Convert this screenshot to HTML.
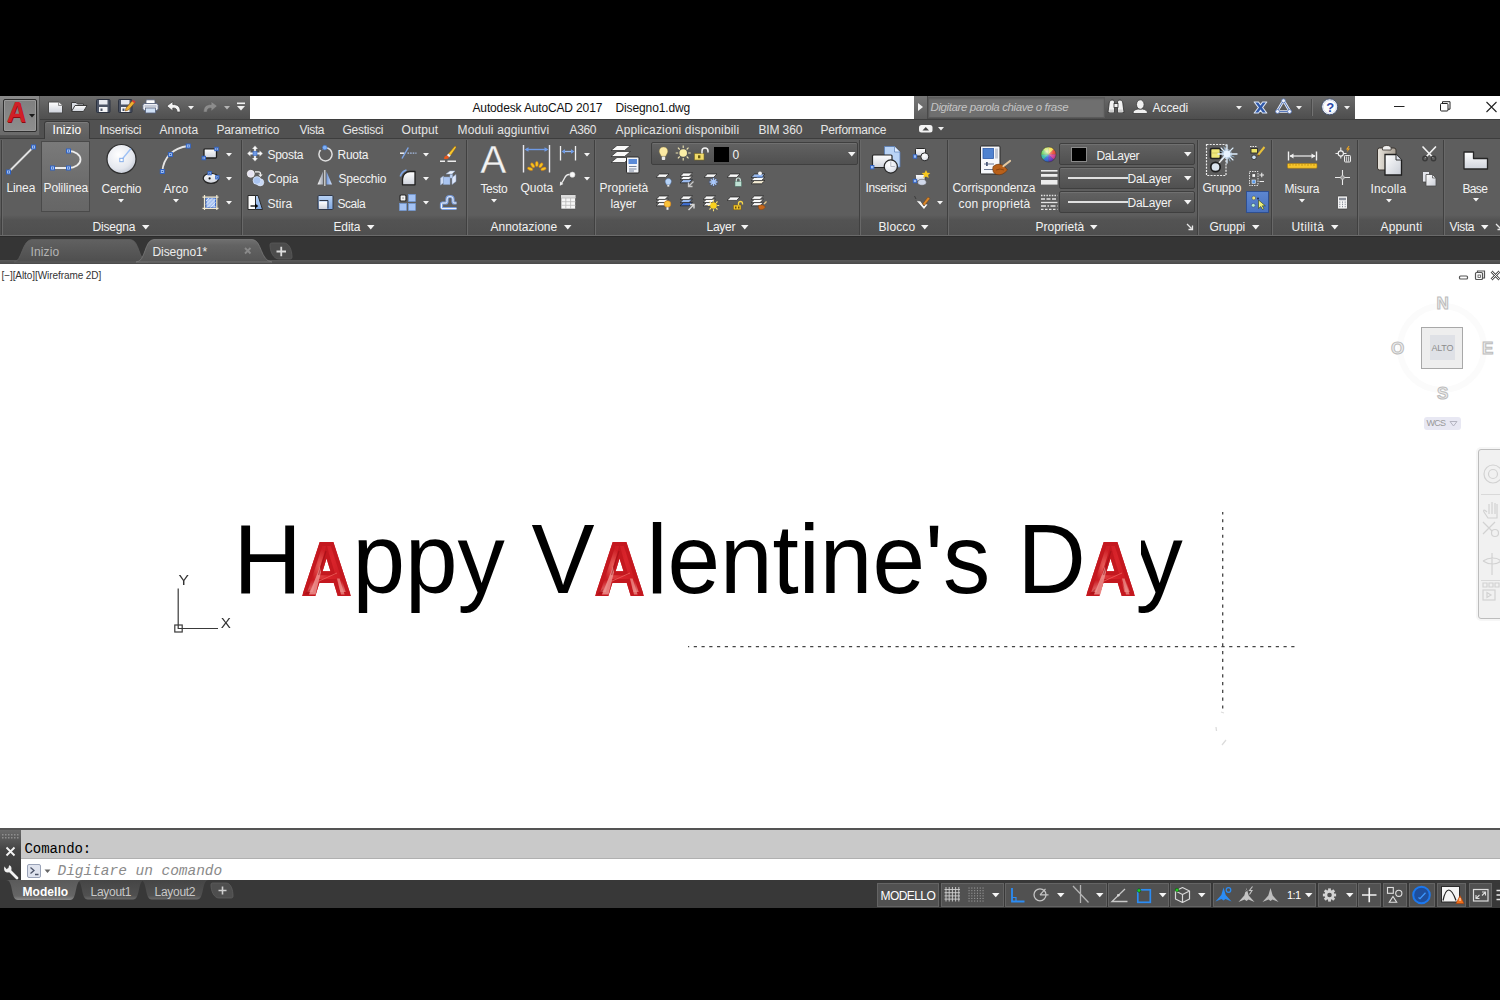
<!DOCTYPE html>
<html lang="it"><head><meta charset="utf-8"><title>Autodesk AutoCAD 2017 - Disegno1.dwg</title>
<style>
*{margin:0;padding:0;box-sizing:border-box}
html,body{width:1500px;height:1000px;overflow:hidden;background:#000}
body{font-family:"Liberation Sans",sans-serif;font-size:12px;color:#f0f0f0;position:relative}
#app{position:absolute;left:0;top:0;width:1500px;height:1000px;background:#000;overflow:hidden}
.a{position:absolute}
.t{position:absolute;white-space:nowrap;line-height:1;}
svg{position:absolute;overflow:visible}
/* regions */
#qat{left:40px;top:96px;width:210px;height:23px;background:linear-gradient(#6d6d6d,#5a5a5a 60%,#505050)}
#title{left:250px;top:96px;width:665px;height:23px;background:#fff}
#info{left:914px;top:96px;width:441px;height:23px;background:linear-gradient(#6a6a6a,#585858 60%,#4e4e4e)}
#winc{left:1355px;top:96px;width:145px;height:23px;background:#fff}
#tabs{left:0;top:119px;width:1500px;height:19px;background:#515151;border-top:1px solid #3e3e3e}
#ribbon{left:0;top:138px;width:1500px;height:98px;background:#5e5e5e;border-top:1px solid #3d3d3d}
#rtitle{left:0;top:215px;width:1500px;height:20px;background:linear-gradient(#5e5e5e,#535353 25%,#4f4f4f)}
#rbot{left:0;top:235px;width:1500px;height:2px;background:#2b2b2b;border-top:1px solid #6a6a6a}
#ftabs{left:0;top:237px;width:1500px;height:27px;background:#353535}
#ftabs2{left:0;top:260px;width:1500px;height:4px;background:linear-gradient(#5a5a5a,#4a4a4a)}
#canvas{left:0;top:264px;width:1500px;height:564px;background:#fff}
#cmdtop{left:0;top:828px;width:1500px;height:2px;background:#545454}
#cmdhist{left:21px;top:830px;width:1479px;height:29px;background:#c9c9c9;border-bottom:1px solid #b0b0b0}
#cmdin{left:21px;top:859px;width:1479px;height:21px;background:#fff}
#cmdgrip{left:0;top:830px;width:21px;height:50px;background:linear-gradient(#6a6a6a,#444 40%,#3a3a3a)}
#status{left:0;top:880px;width:1500px;height:28px;background:#383838}
.sep{position:absolute;top:140px;height:95px;width:2px;border-left:1px solid #404040;border-right:1px solid #686868}
.dd{position:absolute;border:1px solid #3f3f3f;border-radius:2px;background:linear-gradient(#626262,#505050);box-shadow:inset 0 1px 0 #707070}
.sg{position:absolute;top:883px;height:24px;background:#515151;border:1px solid #646464}
.arr{position:absolute;width:0;height:0;border-left:3.5px solid transparent;border-right:3.5px solid transparent;border-top:4px solid #fff}
.arrs{position:absolute;width:0;height:0;border-left:3px solid transparent;border-right:3px solid transparent;border-top:3.5px solid #eee}

.big{font-size:94.5px;top:513.2px;color:#000;letter-spacing:0;transform:scaleY(1.03);transform-origin:0 80px}
.ra{position:absolute;white-space:nowrap;line-height:1;font-weight:bold;font-size:71.7px;top:533.8px;color:#c4161c;transform-origin:0 0;-webkit-text-stroke:4px #c4181f;paint-order:stroke fill;
 background:radial-gradient(ellipse 14px 16px at 24% 86%,#f3a09c 0%,rgba(240,140,136,0) 100%),radial-gradient(ellipse 9px 14px at 84% 84%,#ee908c 0%,rgba(238,144,140,0) 100%),radial-gradient(ellipse 10px 18px at 36% 45%,#e8605c 0%,rgba(232,96,92,0) 100%),linear-gradient(105deg,#b21218 0%,#c91b22 30%,#d9242b 55%,#c91a21 80%,#b41218 100%);-webkit-background-clip:text;background-clip:text;-webkit-text-fill-color:transparent}
.vc{position:absolute;font-weight:bold;font-size:17px;line-height:1;color:#eeeeee;-webkit-text-stroke:1px #bcbcbc}
</style></head>
<body><div id="app">
<div id="qat" class="a"></div>
<div id="title" class="a"></div>
<div id="info" class="a"></div>
<div id="winc" class="a"></div>
<div id="tabs" class="a"></div>
<div id="ribbon" class="a"></div>
<div id="rtitle" class="a"></div>
<div id="rbot" class="a"></div>
<div id="ftabs" class="a"></div>
<div id="ftabs2" class="a"></div>
<div id="canvas" class="a"></div>
<div id="cmdtop" class="a"></div>
<div id="cmdhist" class="a"></div>
<div id="cmdin" class="a"></div>
<div id="cmdgrip" class="a"></div>
<div id="status" class="a"></div>
<div class="a" style="left:0;top:96px;width:40px;height:40px;background:linear-gradient(#8a8a8a,#767676 50%,#6a6a6a);border-right:1px solid #555;border-bottom:1px solid #555"></div>
<div class="a" style="left:3px;top:99px;width:34px;height:33px;background:linear-gradient(#7f7f7f,#8e8e8e);border:1px solid #2e2e2e;border-radius:2px;box-shadow:inset 0 0 0 1px #999"></div>
<div class="a" style="left:44px;top:121px;width:46px;height:18px;background:linear-gradient(#6c6c6c,#5e5e5e);border:1px solid #3a3a3a;border-bottom:none;border-radius:3px 3px 0 0;box-shadow:inset 0 1px 0 #7c7c7c"></div>
<div class="a" style="left:914px;top:96px;width:14px;height:23px;background:linear-gradient(#777,#5c5c5c);border-right:1px solid #4a4a4a"></div>
<div class="a" style="left:928px;top:97px;width:177px;height:21px;background:#6f6f6f;border:1px solid #5a5a5a;box-shadow:inset 0 1px 2px #5c5c5c"></div>
<div class="a" style="left:1311px;top:99px;width:1px;height:17px;background:#4a4a4a;box-shadow:1px 0 0 #727272"></div>
<div class="a" style="left:41px;top:141px;width:49px;height:71px;background:linear-gradient(#7a7a7a,#6c6c6c 60%,#666);border:1px solid #4a4a4a"></div>
<div class="sep" style="left:1px"></div>
<div class="sep" style="left:241px"></div>
<div class="sep" style="left:466px"></div>
<div class="sep" style="left:594px"></div>
<div class="sep" style="left:859px"></div>
<div class="sep" style="left:947px"></div>
<div class="sep" style="left:1197px"></div>
<div class="sep" style="left:1271px"></div>
<div class="sep" style="left:1357px"></div>
<div class="sep" style="left:1443px"></div>
<div class="dd" style="left:651px;top:142px;width:207px;height:23px"></div>
<div class="dd" style="left:1059px;top:143px;width:136px;height:22px"></div>
<div class="dd" style="left:1059px;top:167px;width:136px;height:22px"></div>
<div class="dd" style="left:1059px;top:191px;width:136px;height:22px"></div>
<div class="a" style="left:714px;top:147px;width:15px;height:15px;background:#000"></div>
<div class="a" style="left:1071px;top:147px;width:16px;height:15px;background:#000;border:1px solid #8a8a8a"></div>
<div class="a" style="left:1068px;top:177px;width:60px;height:1.5px;background:#e0e0e0"></div>
<div class="a" style="left:1068px;top:201px;width:60px;height:1.5px;background:#e0e0e0"></div>
<div class="a" style="left:1246px;top:191px;width:23px;height:22px;background:linear-gradient(#5c86d0,#4a72be);border:1px solid #2f4f8f"></div>
<div class="sg" style="left:877px;width:62px"></div>
<div class="sg" style="left:941px;width:63px"></div>
<div class="sg" style="left:1005px;width:102px"></div>
<div class="sg" style="left:1108px;width:61px"></div>
<div class="sg" style="left:1170px;width:41px"></div>
<div class="sg" style="left:1213px;width:103px"></div>
<div class="sg" style="left:1318px;width:39px"></div>
<div class="sg" style="left:1358px;width:23px"></div>
<div class="sg" style="left:1383px;width:24px"></div>
<div class="sg" style="left:1409px;width:26px"></div>
<div class="sg" style="left:1437px;width:29px"></div>
<div class="sg" style="left:1469px;width:23px"></div><svg width="0" height="0" style="left:0;top:0"><defs>
<linearGradient id="gw" x1="0" y1="0" x2="0" y2="1"><stop offset="0" stop-color="#ffffff"/><stop offset="1" stop-color="#cfd3dc"/></linearGradient>
<linearGradient id="gw2" x1="0" y1="0" x2="1" y2="1"><stop offset="0" stop-color="#ffffff"/><stop offset="1" stop-color="#c9cdd6"/></linearGradient>
<linearGradient id="gb" x1="0" y1="0" x2="0" y2="1"><stop offset="0" stop-color="#b9d3f5"/><stop offset="1" stop-color="#7ea6e0"/></linearGradient>
<linearGradient id="gy" x1="0" y1="0" x2="0" y2="1"><stop offset="0" stop-color="#fff2a8"/><stop offset="1" stop-color="#f2c84b"/></linearGradient>
<radialGradient id="gsph" cx="0.4" cy="0.35" r="0.7"><stop offset="0" stop-color="#ffffff"/><stop offset="0.7" stop-color="#e4e7ee"/><stop offset="1" stop-color="#c3c8d4"/></radialGradient>
<linearGradient id="gred" x1="0" y1="0" x2="0.3" y2="1"><stop offset="0" stop-color="#b50f16"/><stop offset="0.5" stop-color="#d8242b"/><stop offset="1" stop-color="#e86a6e"/></linearGradient>
</defs></svg>
<span class="t" style="left:7.500px;top:97.800px;font-size:29px;font-weight:bold;color:#d01f27;transform:scaleX(0.92) skewX(-4deg);transform-origin:0 0;text-shadow:1px 1px 0 #8a0a10">A</span>
<svg style="left:28.5px;top:113.5px" width="6" height="3.5" viewBox="0 0 6 3.5"><path d="M0 0h6 l-3 3.5 z" fill="#1a1a1a"/></svg>
<svg style="left:47px;top:100px" width="17" height="15" viewBox="0 0 17 15" ><path d="M1.5 2h10l4 3.500v7.500h-14z" fill="url(#gw)" stroke="#4a4a4a" stroke-width="1"/><path d="M11.500 2v3.500h4" fill="#e8e8e8" stroke="#777" stroke-width="0.800"/></svg>
<svg style="left:70px;top:100px" width="18" height="14" viewBox="0 0 18 14" ><path d="M1.500 11.500v-9h4.500l1.500 1.500h6v2" fill="#d8dbe2" stroke="#3c3c3c" stroke-width="1"/><path d="M1.500 11.500l3.500-6h12l-3.500 6z" fill="url(#gw)" stroke="#3c3c3c" stroke-width="1"/></svg>
<svg style="left:96px;top:99px" width="15" height="14" viewBox="0 0 15 14" ><rect x="0.5" y="0.5" width="13.500" height="13" rx="1" fill="#4b5364" stroke="#2d3340"/><rect x="3" y="1" width="8.500" height="4.500" fill="#e6e8ee"/><rect x="3" y="8" width="8.500" height="5" fill="#f4f4f6"/><rect x="4.500" y="9.500" width="2" height="2.500" fill="#4b5364"/></svg>
<svg style="left:118px;top:99px" width="18" height="14" viewBox="0 0 18 14" ><rect x="0.5" y="0.5" width="13.500" height="13" rx="1" fill="#4b5364" stroke="#2d3340"/><rect x="3" y="1" width="8.500" height="4.500" fill="#e6e8ee"/><rect x="3" y="8" width="8.500" height="5" fill="#f4f4f6"/><rect x="4.500" y="9.500" width="2" height="2.500" fill="#4b5364"/><path d="M8 9l6.500-7.500 2.500 2-6.500 7.500-3.200 1z" fill="#f0b030" stroke="#7a4a10" stroke-width="0.600"/><path d="M14.500 1.500l2.500 2" stroke="#d03a3a" stroke-width="2"/></svg>
<svg style="left:142px;top:99px" width="17" height="15" viewBox="0 0 17 15" ><rect x="4" y="0.800" width="9" height="5" rx="1" fill="#fff" stroke="#55607a" stroke-width="0.800"/><rect x="0.800" y="4.500" width="15.400" height="7" rx="2" fill="#eef0f5" stroke="#55607a" stroke-width="0.900"/><rect x="3.500" y="9" width="10" height="5" fill="#cfe0f5" stroke="#55607a" stroke-width="0.800"/><path d="M2.500 7h12" stroke="#9aa4bb" stroke-width="1"/></svg>
<svg style="left:166px;top:101px" width="16" height="12" viewBox="0 0 16 12" ><path d="M0.800 5l6-4.500v3c5 0 7.500 2 7.500 7.500h-3.300c0-3-1.200-4-4.200-4v3z" fill="#f4f4f4" stroke="#3c3c3c" stroke-width="0.700"/></svg>
<svg style="left:188px;top:106px" width="6" height="3.5" viewBox="0 0 6 3.5"><path d="M0 0h6 l-3 3.5 z" fill="#f0f0f0"/></svg>
<svg style="left:202px;top:101px" width="16" height="12" viewBox="0 0 16 12" ><path d="M15.200 5l-6-4.500v3c-5 0-7.500 2-7.500 7.500h3.300c0-3 1.200-4 4.200-4v3z" fill="#8c8c8c" stroke="#5a5a5a" stroke-width="0.500"/></svg>
<svg style="left:224px;top:106px" width="6" height="3.5" viewBox="0 0 6 3.5"><path d="M0 0h6 l-3 3.5 z" fill="#b4b4b4"/></svg>
<svg style="left:236px;top:102px" width="10" height="9" viewBox="0 0 10 9" ><rect x="1" y="0.500" width="8" height="1.600" fill="#f0f0f0"/><path d="M1 4h8l-4 4.500z" fill="#f0f0f0"/></svg>
<svg style="left:917px;top:102px" width="7" height="10" viewBox="0 0 7 10" ><path d="M1 1l5 4-5 4z" fill="#f4f4f4"/></svg>
<svg style="left:1107px;top:99px" width="18" height="16" viewBox="0 0 18 16" ><g fill="#f2f2f2" stroke="#2f2f2f" stroke-width="0.800"><path d="M2 6c0-3 1-5 3-5s2.500 1 2.500 3v9.500h-6.500z"/><path d="M16 6c0-3-1-5-3-5s-2.500 1-2.500 3v9.500h6.500z"/><rect x="7" y="4.500" width="4" height="4"/></g><rect x="2.300" y="10.500" width="4.500" height="3" fill="#cfcfcf"/><rect x="11.200" y="10.500" width="4.500" height="3" fill="#cfcfcf"/></svg>
<svg style="left:1132px;top:99px" width="17" height="16" viewBox="0 0 17 16" ><g fill="#f0f0f0" stroke="#3a3a3a" stroke-width="0.800"><path d="M1 14.500c0-3 2-4 5-4.500h4.500c3 0.500 5 1.500 5 4.500z"/><ellipse cx="8.300" cy="5.500" rx="3.800" ry="4.700"/></g></svg>
<svg style="left:1236px;top:106px" width="6" height="3.5" viewBox="0 0 6 3.5"><path d="M0 0h6 l-3 3.5 z" fill="#ededed"/></svg>
<svg style="left:1252.5px;top:100.5px" width="15" height="13" viewBox="0 0 15 13" ><path d="M1.200 1h4.300l2 2.800 2-2.800h4.300l-4.200 5.500 4.200 5.500h-4.300l-2-2.800-2 2.800h-4.300l4.200-5.500z" fill="#2f58a8" stroke="#dfe8f8" stroke-width="1.100" stroke-linejoin="round"/></svg>
<svg style="left:1275px;top:98px" width="18" height="17" viewBox="0 0 18 17" ><path d="M8.500 2.500l6.500 11h-13z" fill="none" stroke="#e6ecf8" stroke-width="2.600" stroke-linejoin="round"/><path d="M8.500 2.500l6.500 11h-13z" fill="none" stroke="#4a6db5" stroke-width="0.900" stroke-linejoin="round"/><circle cx="8.500" cy="2.800" r="2" fill="#eef2fb" stroke="#4a6db5" stroke-width="0.700"/><circle cx="2.500" cy="13.500" r="2" fill="#eef2fb" stroke="#4a6db5" stroke-width="0.700"/><circle cx="14.500" cy="13.500" r="2" fill="#eef2fb" stroke="#4a6db5" stroke-width="0.700"/></svg>
<svg style="left:1296px;top:106px" width="6" height="3.5" viewBox="0 0 6 3.5"><path d="M0 0h6 l-3 3.5 z" fill="#ededed"/></svg>
<svg style="left:1321px;top:98px" width="18" height="18" viewBox="0 0 18 18" ><circle cx="8.700" cy="8.800" r="8" fill="#fdfdfd" stroke="#3a4a6a" stroke-width="0.900"/><circle cx="8.700" cy="8.800" r="6.600" fill="none" stroke="#c9d3ea" stroke-width="0.800"/></svg>
<span class="t" style="left:1326.200px;top:101px;font-size:13px;font-weight:bold;color:#2848a8">?</span>
<svg style="left:1344px;top:106px" width="6" height="3.5" viewBox="0 0 6 3.5"><path d="M0 0h6 l-3 3.5 z" fill="#ededed"/></svg>
<svg style="left:1390px;top:98px" width="110" height="18" viewBox="0 0 110 18" ><path d="M4 8.500h10.500" stroke="#222" stroke-width="1"/><rect x="50.500" y="5.500" width="7.500" height="7.500" rx="1" fill="none" stroke="#222"/><path d="M52.500 5.500v-1.800h7.500v7.500h-2" fill="none" stroke="#222"/><path d="M96.500 4l10 10M106.500 4l-10 10" stroke="#222" stroke-width="1.100"/></svg>
<svg style="left:918px;top:124px" width="16" height="10" viewBox="0 0 16 10" ><rect x="1" y="1" width="13.500" height="7.500" rx="2.500" fill="#f2f2f2"/><path d="M4.500 6.500h6.500l-3.250-3.500z" fill="#444"/></svg>
<svg style="left:938px;top:127px" width="6" height="3.5" viewBox="0 0 6 3.5"><path d="M0 0h6 l-3 3.5 z" fill="#ededed"/></svg>
<svg style="left:0;top:0" width="1500" height="240" viewBox="0 0 1500 240" ><path d="M8.500 172L33.500 147" stroke="#e2e2e2" stroke-width="1.800" stroke-linecap="round"/><rect x="31.5" y="145" width="4" height="4" fill="#9dbdf0" stroke="#2f62c4" stroke-width="1"/><rect x="33" y="146.5" width="1" height="1" fill="#1c3f8a"/><rect x="6.5" y="170" width="4" height="4" fill="#9dbdf0" stroke="#2f62c4" stroke-width="1"/><rect x="8" y="171.5" width="1" height="1" fill="#1c3f8a"/><path d="M52.500 168H68.500A12 8.500 0 0 0 68.500 151" fill="none" stroke="#ececec" stroke-width="1.800"/><rect x="66.5" y="149" width="4" height="4" fill="#9dbdf0" stroke="#2f62c4" stroke-width="1"/><rect x="68" y="150.5" width="1" height="1" fill="#1c3f8a"/><rect x="50.5" y="166" width="4" height="4" fill="#9dbdf0" stroke="#2f62c4" stroke-width="1"/><rect x="52" y="167.5" width="1" height="1" fill="#1c3f8a"/><rect x="66.5" y="166" width="4" height="4" fill="#9dbdf0" stroke="#2f62c4" stroke-width="1"/><rect x="68" y="167.5" width="1" height="1" fill="#1c3f8a"/><circle cx="121.500" cy="159" r="14.500" fill="url(#gsph)" stroke="#2e2e2e" stroke-width="1.200"/><path d="M121.500 160L131 148.500" stroke="#9cc0f5" stroke-width="1.300"/><rect x="119.800" y="158.300" width="3.400" height="3.400" fill="#fff" stroke="#7aa6e8" stroke-width="0.900"/><path d="M162.300 171.500C163.500 158 172 148 188.300 146" fill="none" stroke="#e6e6e6" stroke-width="1.800"/><rect x="186.3" y="144" width="4" height="4" fill="#9dbdf0" stroke="#2f62c4" stroke-width="1"/><rect x="187.8" y="145.5" width="1" height="1" fill="#1c3f8a"/><rect x="168.4" y="152.6" width="4" height="4" fill="#9dbdf0" stroke="#2f62c4" stroke-width="1"/><rect x="169.9" y="154.1" width="1" height="1" fill="#1c3f8a"/><rect x="160.3" y="169.5" width="4" height="4" fill="#9dbdf0" stroke="#2f62c4" stroke-width="1"/><rect x="161.8" y="171" width="1" height="1" fill="#1c3f8a"/><rect x="204" y="148.800" width="12.500" height="9.200" rx="1" fill="url(#gw)" stroke="#1f1f1f" stroke-width="1.300"/><rect x="214.8" y="147.3" width="3.4" height="3.4" fill="#9dbdf0" stroke="#2f62c4" stroke-width="1"/><rect x="216" y="148.5" width="1" height="1" fill="#1c3f8a"/><rect x="202.1" y="156.3" width="3.4" height="3.4" fill="#9dbdf0" stroke="#2f62c4" stroke-width="1"/><rect x="203.3" y="157.5" width="1" height="1" fill="#1c3f8a"/><ellipse cx="211" cy="178.300" rx="7.800" ry="5" fill="url(#gw)" stroke="#262626" stroke-width="1.300"/><circle cx="209.600" cy="178.400" r="1.100" fill="#111"/><rect x="208" y="171.6" width="3.2" height="3.2" fill="#9dbdf0" stroke="#2f62c4" stroke-width="1"/><rect x="209.1" y="172.7" width="1" height="1" fill="#1c3f8a"/><rect x="215.7" y="175.7" width="3.2" height="3.2" fill="#9dbdf0" stroke="#2f62c4" stroke-width="1"/><rect x="216.8" y="176.8" width="1" height="1" fill="#1c3f8a"/><rect x="206" y="198" width="9.500" height="9.500" fill="#a9c4f2" stroke="#3f6fd0" stroke-width="1"/><path d="M206 201l3-3M206 204.500l6.500-6.500M207 207.500l8.500-8.500M210.500 207.500l5-5M214 207.500l1.500-1.500" stroke="#dfe9fb" stroke-width="0.900"/><path d="M204.500 195v15M216.800 195v15M202.500 197.200h16M202.500 208.300h16" stroke="#f1ead2" stroke-width="1.200"/></svg>
<svg style="left:226px;top:152.5px" width="6" height="3.5" viewBox="0 0 6 3.5"><path d="M0 0h6 l-3 3.5 z" fill="#f4f4f4"/></svg>
<svg style="left:226px;top:176.5px" width="6" height="3.5" viewBox="0 0 6 3.5"><path d="M0 0h6 l-3 3.5 z" fill="#f4f4f4"/></svg>
<svg style="left:226px;top:201px" width="6" height="3.5" viewBox="0 0 6 3.5"><path d="M0 0h6 l-3 3.5 z" fill="#f4f4f4"/></svg>
<svg style="left:118px;top:198.5px" width="6" height="3.5" viewBox="0 0 6 3.5"><path d="M0 0h6 l-3 3.5 z" fill="#f4f4f4"/></svg>
<svg style="left:173px;top:198.5px" width="6" height="3.5" viewBox="0 0 6 3.5"><path d="M0 0h6 l-3 3.5 z" fill="#f4f4f4"/></svg>
<svg style="left:142px;top:225px" width="7.5" height="4.5" viewBox="0 0 7.5 4.5"><path d="M0 0h7.5 l-3.75 4.5 z" fill="#f4f4f4"/></svg>
<svg style="left:367px;top:225px" width="7.5" height="4.5" viewBox="0 0 7.5 4.5"><path d="M0 0h7.5 l-3.75 4.5 z" fill="#f4f4f4"/></svg>
<svg style="left:564px;top:225px" width="7.5" height="4.5" viewBox="0 0 7.5 4.5"><path d="M0 0h7.5 l-3.75 4.5 z" fill="#f4f4f4"/></svg>
<svg style="left:741px;top:225px" width="7.5" height="4.5" viewBox="0 0 7.5 4.5"><path d="M0 0h7.5 l-3.75 4.5 z" fill="#f4f4f4"/></svg>
<svg style="left:921px;top:225px" width="7.5" height="4.5" viewBox="0 0 7.5 4.5"><path d="M0 0h7.5 l-3.75 4.5 z" fill="#f4f4f4"/></svg>
<svg style="left:1090px;top:225px" width="7.5" height="4.5" viewBox="0 0 7.5 4.5"><path d="M0 0h7.5 l-3.75 4.5 z" fill="#f4f4f4"/></svg>
<svg style="left:1252px;top:225px" width="7.5" height="4.5" viewBox="0 0 7.5 4.5"><path d="M0 0h7.5 l-3.75 4.5 z" fill="#f4f4f4"/></svg>
<svg style="left:1331px;top:225px" width="7.5" height="4.5" viewBox="0 0 7.5 4.5"><path d="M0 0h7.5 l-3.75 4.5 z" fill="#f4f4f4"/></svg>
<svg style="left:1481px;top:225px" width="7.5" height="4.5" viewBox="0 0 7.5 4.5"><path d="M0 0h7.5 l-3.75 4.5 z" fill="#f4f4f4"/></svg>
<svg style="left:1186px;top:223px" width="8" height="8" viewBox="0 0 8 8" ><path d="M1 1l4.500 4.500M6.500 2.500v4h-4" fill="none" stroke="#e8e8e8" stroke-width="1.300"/></svg>
<svg style="left:1495px;top:223px" width="6" height="8" viewBox="0 0 6 8" ><path d="M1 1l4.500 4.500M6.500 2.500v4h-4" fill="none" stroke="#e8e8e8" stroke-width="1.300"/></svg>
<svg style="left:0;top:0" width="1500" height="240" viewBox="0 0 1500 240" ><g transform="translate(255 153.500)"><path d="M0-8l3.200 3.600h-2v3.200h3.200v-2l3.600 3.200-3.600 3.200v-2h-3.200v3.200h2l-3.200 3.600-3.200-3.600h2v-3.200h-3.200v2l-3.600-3.200 3.600-3.200v2h3.200v-3.200h-2z" fill="#f6f6f6" stroke="#555" stroke-width="0.400"/><rect x="-2" y="-2" width="4" height="4" fill="#6f9be6" stroke="#3565c0" stroke-width="0.600"/></g><circle cx="325.500" cy="154.300" r="6.600" fill="none" stroke="#dedede" stroke-width="1.500"/><path d="M320.500 150a6.600 6.600 0 0 1 3-2.200" stroke="#5a5a5a" stroke-width="2.200" fill="none"/><circle cx="324.800" cy="147.600" r="2.300" fill="#7fb0f5" stroke="#3d73d0" stroke-width="0.600"/><circle cx="250.800" cy="173.800" r="3.500" fill="#e6e3f2" stroke="#f8f8f8" stroke-width="0.800"/><circle cx="260.200" cy="182.300" r="3.600" fill="#c7d8f5" stroke="#e8eefb" stroke-width="0.600"/><circle cx="257" cy="180.500" r="3.900" fill="#a9c4f0" stroke="#dfe8fa" stroke-width="0.700"/><path d="M255 171.800h3.500q2 0 2 2v1" fill="none" stroke="#f4f4f4" stroke-width="1.300"/><path d="M258.300 174.500h4.400l-2.200 2.500z" fill="#f4f4f4"/><defs><linearGradient id="sp1" x1="0" y1="0" x2="1" y2="0"><stop offset="0" stop-color="#ffffff"/><stop offset="1" stop-color="#9aa0ac"/></linearGradient><linearGradient id="sp2" x1="0" y1="0" x2="1" y2="0"><stop offset="0" stop-color="#6f95d8"/><stop offset="1" stop-color="#d5e3fa"/></linearGradient></defs><path d="M323 171.500V184.500H317.500z" fill="url(#sp1)"/><path d="M326.500 171.500V184.500H332z" fill="url(#sp2)"/><path d="M324.750 170v16" stroke="#c4c4c4" stroke-width="1.600"/><path d="M248 195.500h7.500v14h-7.500z" fill="#fdfdfd" stroke="#2a2a2a" stroke-width="1"/><path d="M255.500 195.500h2.500l4.500 14h-7z" fill="url(#gb)" stroke="#2a2a2a" stroke-width="1"/><path d="M250.500 206h5.500" stroke="#000" stroke-width="1.300"/><path d="M255 203.500l3.300 2.500-3.300 2.500z" fill="#000"/><rect x="318" y="195.500" width="15" height="14" rx="1" fill="url(#gb)" stroke="#2e3646" stroke-width="1"/><path d="M319.500 200.500h8.500v8" fill="none" stroke="#2e3646" stroke-width="1"/><rect x="319" y="201.500" width="8" height="7.500" fill="url(#gw)"/><path d="M400 153.200h4.500" stroke="#f0f0f0" stroke-width="1.500"/><path d="M407.500 153.200h9" stroke="#a9bfe6" stroke-width="1.300" stroke-dasharray="1.600 1"/><path d="M402 158.500L408.300 147.500" stroke="#7ea5e6" stroke-width="1.500"/><path d="M440 161.300h5M447.500 161.300h8.500" stroke="#ececec" stroke-width="1.400"/><path d="M448.500 153.500l6.500-7.500q1.500 0 1 1.800l-5.300 7.700z" fill="#f6c62e" stroke="#8a5a10" stroke-width="0.500"/><path d="M446.800 155.200l1.700-1.700 2.200 2-1.600 1.800z" fill="#f4f4f4"/><path d="M443.800 158.800q0.300-2.800 3-3.600l2.300 2q-1 2.600-5.300 1.600z" fill="#e8561a"/><path d="M402.500 184.800V179A7.500 7.500 0 0 1 410 171.500H415V184.800z" fill="url(#gw)" stroke="#1f1f1f" stroke-width="1.300" stroke-linejoin="round"/><path d="M400.300 176.500A9.500 9.500 0 0 1 406.500 170" fill="none" stroke="#7ea5e6" stroke-width="1.600"/><g stroke="#8fa6cc" stroke-width="0.500"><path d="M446 174l4-3h5l-3 3z" fill="#eef3fc"/><path d="M440.500 178l3-2v7l-3 2z" fill="#cfdcf3"/><path d="M443.500 177h6.500v7.500h-6.500z" fill="#a9c4f0"/><path d="M452 177.500l4-3v7l-4 3z" fill="#dfe8fa"/><path d="M450 174.500h2.500v3.500h-2.500z" fill="#c0d3f2"/></g><rect x="400" y="195" width="6" height="6" rx="1" fill="#f4f4f4" stroke="#2a2a2a" stroke-width="1.200"/><rect x="402.300" y="197.300" width="1.500" height="1.500" fill="#999"/><rect x="408.5" y="194.5" width="7" height="7" fill="#a3c2f4" stroke="#6f9be0" stroke-width="0.600"/><rect x="399.5" y="203.5" width="7" height="7" fill="#a3c2f4" stroke="#6f9be0" stroke-width="0.600"/><rect x="408.5" y="203.5" width="7" height="7" fill="#a3c2f4" stroke="#6f9be0" stroke-width="0.600"/><path d="M441.500 208.500v-4.500q0-1 1-1h3.500q1 0 1-1.500v-2.500q0-2.500 3-2.500t3 2.500v2.500q0 1.500 1 1.500h2.500M441.500 208.500h15" fill="none" stroke="#7b9fe0" stroke-width="3.200" stroke-linejoin="round"/><path d="M441.500 208.500v-4.500q0-1 1-1h3.500q1 0 1-1.500v-2.500q0-2.500 3-2.500t3 2.500v2.500q0 1.500 1 1.500h2.500M441.500 208.500h15" fill="none" stroke="#f2f2f2" stroke-width="1" stroke-linejoin="round"/></svg>
<svg style="left:423.3px;top:152.5px" width="6" height="3.5" viewBox="0 0 6 3.5"><path d="M0 0h6 l-3 3.5 z" fill="#f4f4f4"/></svg>
<svg style="left:423.3px;top:176.5px" width="6" height="3.5" viewBox="0 0 6 3.5"><path d="M0 0h6 l-3 3.5 z" fill="#f4f4f4"/></svg>
<svg style="left:423.3px;top:201px" width="6" height="3.5" viewBox="0 0 6 3.5"><path d="M0 0h6 l-3 3.5 z" fill="#f4f4f4"/></svg>
<span class="t" style="left:480.300px;top:140.200px;font-size:39px;color:#f2f2f2;-webkit-text-stroke:0.300px #5a5a5a">A</span>
<svg style="left:491px;top:198.5px" width="6" height="3.5" viewBox="0 0 6 3.5"><path d="M0 0h6 l-3 3.5 z" fill="#f4f4f4"/></svg>
<svg style="left:0;top:0" width="1500" height="240" viewBox="0 0 1500 240" ><path d="M523.500 145v27.500M549.500 145v27.500" stroke="#e8e8ee" stroke-width="1.400"/><path d="M526 149.500h21" stroke="#6f9be6" stroke-width="1.400"/><path d="M524.500 149.500l4-2.200v4.400zM548.500 149.500l-4-2.200v4.400z" fill="#6f9be6"/><g transform="translate(536.800 171) rotate(-72)"><ellipse cx="0" cy="-7" rx="1.500" ry="2.800" fill="#f7c41c" stroke="#c9731a" stroke-width="0.500"/></g><g transform="translate(536.800 171) rotate(-36)"><ellipse cx="0" cy="-7" rx="1.500" ry="2.800" fill="#f7c41c" stroke="#c9731a" stroke-width="0.500"/></g><g transform="translate(536.800 171) rotate(0)"><ellipse cx="0" cy="-7" rx="1.500" ry="2.800" fill="#f7c41c" stroke="#c9731a" stroke-width="0.500"/></g><g transform="translate(536.800 171) rotate(36)"><ellipse cx="0" cy="-7" rx="1.500" ry="2.800" fill="#f7c41c" stroke="#c9731a" stroke-width="0.500"/></g><g transform="translate(536.800 171) rotate(72)"><ellipse cx="0" cy="-7" rx="1.500" ry="2.800" fill="#f7c41c" stroke="#c9731a" stroke-width="0.500"/></g><path d="M560.500 146v14.500M575.500 146v14.500" stroke="#f0f0f0" stroke-width="1.300"/><path d="M563 151.500h10" stroke="#9dbdf0" stroke-width="1.300"/><path d="M561.500 151.500l3.500-2.200v4.400zM574.500 151.500l-3.500-2.200v4.400z" fill="#6f9be6"/><circle cx="572.400" cy="174.700" r="2.600" fill="#fafafa" stroke="#d0d0d0" stroke-width="0.600"/><path d="M569.500 174.500c-5 -0.500 -4 4 -8 8.500" fill="none" stroke="#ececec" stroke-width="1.300"/><path d="M559.800 185.800l0.400-4.300 3.200 2.400z" fill="#ececec"/><rect x="561" y="195" width="14.500" height="14" fill="#f6f6f6" stroke="#4a4a4a" stroke-width="0.600"/><rect x="561" y="195" width="14.500" height="3" fill="#dcdcdc"/><path d="M561 198h14.500M561 201.700h14.500M561 205.300h14.500M565.800 198v11M570.600 198v11" stroke="#b8b8b8" stroke-width="0.800"/><path d="M617 157.5h13.5l-6 5h-13.5z" fill="#f8f8f8" stroke="#2a2a2a" stroke-width="0.700"/><path d="M617 151.5h13.5l-6 5h-13.5z" fill="#f8f8f8" stroke="#2a2a2a" stroke-width="0.700"/><path d="M617 145.5h13.5l-6 5h-13.5z" fill="#f8f8f8" stroke="#2a2a2a" stroke-width="0.700"/><rect x="626.500" y="157" width="12.500" height="16" rx="1" fill="#f4f6fa" stroke="#2a2a2a" stroke-width="1"/><rect x="628.500" y="159" width="8.500" height="5" fill="#5b8bd8"/><path d="M629 166.500h7.500M629 169h7.500M629 171h5" stroke="#6a7894" stroke-width="0.900"/><path d="M663.500 147c2.800 0 4.300 2 4.300 4.300 0 2-1.500 3-2 5h-4.600c-0.500-2-2-3-2-5 0-2.300 1.500-4.300 4.300-4.300z" fill="#fbe9a3" stroke="#8a7a40" stroke-width="0.400"/><rect x="661.800" y="156.600" width="3.400" height="3.400" rx="0.800" fill="#e8e8e8"/><circle cx="683.200" cy="153" r="3.800" fill="#fbeea6"/><g stroke="#f0e6b4" stroke-width="1.100"><path d="M683.200 145.500v2.500M683.200 158v2.500M675.700 153h2.500M688.200 153h2.500M677.900 147.700l1.800 1.800M686.700 156.500l1.800 1.800M677.900 158.300l1.800-1.800M686.700 149.500l1.800-1.800"/></g><rect x="694.500" y="153.500" width="9.500" height="6.500" fill="#f2dc6a" stroke="#7a6a20" stroke-width="0.600"/><rect x="698" y="155.300" width="2.400" height="3" fill="#6a5a10"/><path d="M702 153.500v-2.500a3 3 0 0 1 6 0v1.500" fill="none" stroke="#f4f4f4" stroke-width="1.500"/><path d="M659.5 174h9.5l-3.5 3.4h-9.5z" fill="#fafafa" stroke="#1f1f1f" stroke-width="0.700"/><path d="M668.300 178.500c2 0 3 1.400 3 3 0 1.400-1 2-1.300 3.300h-3.400c-0.300-1.300-1.300-1.900-1.300-3.300 0-1.600 1-3 3-3z" fill="#b7d4f8" stroke="#5a86c8" stroke-width="0.400"/><rect x="667.300" y="184.800" width="2" height="1.800" fill="#e8e8e8"/><path d="M683.5 179.4h9l-3.5 3.4h-9z" fill="#9dbdf0" stroke="#1f1f1f" stroke-width="0.700"/><path d="M683.5 176.2h9l-3.5 3.4h-9z" fill="#fafafa" stroke="#1f1f1f" stroke-width="0.700"/><path d="M683.5 173h9l-3.5 3.4h-9z" fill="#fafafa" stroke="#1f1f1f" stroke-width="0.700"/><path d="M693.500 181.500l-4.500 4.500M688.500 182.500v4h4" fill="none" stroke="#c8c8c8" stroke-width="1.300"/><path d="M707.5 174h9.5l-3.5 3.4h-9.5z" fill="#fafafa" stroke="#1f1f1f" stroke-width="0.700"/><g stroke="#a9c8fb" stroke-width="1.300"><path d="M713.500 178v8M709.500 182h8M710.700 179.200l5.600 5.600M716.300 179.200l-5.600 5.600"/></g><circle cx="713.500" cy="182" r="4.300" fill="none" stroke="#2c4a8a" stroke-width="0.500" opacity="0.600"/><path d="M730.5 174h9.5l-3.5 3.4h-9.5z" fill="#fafafa" stroke="#1f1f1f" stroke-width="0.700"/><rect x="735" y="181.500" width="6.500" height="4.800" fill="#bfe0d4" stroke="#4a7a6a" stroke-width="0.500"/><path d="M736.300 181.500v-1.500a2 2 0 0 1 4 0v1.500" fill="none" stroke="#cfe8e0" stroke-width="1.200"/><path d="M754.5 180.4h10.5l-3.5 3.4h-10.5z" fill="#f4ecd4" stroke="#1f1f1f" stroke-width="0.700"/><path d="M754.5 177.2h10.5l-3.5 3.4h-10.5z" fill="#fafafa" stroke="#1f1f1f" stroke-width="0.700"/><path d="M754.5 174h10.5l-3.5 3.4h-10.5z" fill="#9dbdf0" stroke="#1f1f1f" stroke-width="0.700"/><circle cx="760" cy="173.300" r="1.900" fill="#f4f4f4"/><path d="M756.500 177.500c1-2.500 6-2.500 7 0z" fill="#6f9be6"/><path d="M659.5 202.4h9l-3.5 3.4h-9z" fill="#fafafa" stroke="#1f1f1f" stroke-width="0.700"/><path d="M659.5 199.2h9l-3.5 3.4h-9z" fill="#fafafa" stroke="#1f1f1f" stroke-width="0.700"/><path d="M659.5 196h9l-3.5 3.4h-9z" fill="#fafafa" stroke="#1f1f1f" stroke-width="0.700"/><circle cx="667.500" cy="204" r="3.300" fill="#f9c33a" stroke="#d9801a" stroke-width="0.600"/><rect x="666.500" y="207.300" width="2" height="2.500" fill="#f0f0f0"/><path d="M683.5 202.4h9l-3.5 3.4h-9z" fill="#3f6fd0" stroke="#1f1f1f" stroke-width="0.700"/><path d="M683.5 199.2h9l-3.5 3.4h-9z" fill="#9dbdf0" stroke="#1f1f1f" stroke-width="0.700"/><path d="M683.5 196h9l-3.5 3.4h-9z" fill="#fafafa" stroke="#1f1f1f" stroke-width="0.700"/><path d="M688.500 210l5-5M690 204.500h4v4" fill="none" stroke="#d8d8d8" stroke-width="1.400"/><path d="M706.5 202.4h9l-3.5 3.4h-9z" fill="#fafafa" stroke="#1f1f1f" stroke-width="0.700"/><path d="M706.5 199.2h9l-3.5 3.4h-9z" fill="#fafafa" stroke="#1f1f1f" stroke-width="0.700"/><path d="M706.5 196h9l-3.5 3.4h-9z" fill="#fafafa" stroke="#1f1f1f" stroke-width="0.700"/><circle cx="713.500" cy="205.500" r="3.300" fill="#fbd21e"/><g stroke="#fbe27a" stroke-width="1.100"><path d="M713.500 199.800v2M713.500 209.200v2M707.800 205.500h2M717.200 205.500h2M709.500 201.500l1.400 1.400M716.100 208.100l1.400 1.400M709.500 209.500l1.400-1.400M716.100 202.900l1.400-1.400"/></g><path d="M730.5 197h9.5l-3.5 3.4h-9.5z" fill="#fafafa" stroke="#1f1f1f" stroke-width="0.700"/><rect x="733.500" y="205" width="7.500" height="4.800" fill="#f2c82a" stroke="#7a5a10" stroke-width="0.500"/><rect x="735" y="206.500" width="1.500" height="2" fill="#6a4a10"/><rect x="738" y="206.500" width="1.500" height="2" fill="#6a4a10"/><path d="M738.500 205v-1.500a2 2 0 0 1 4 0v1" fill="none" stroke="#f4d44a" stroke-width="1.300"/><path d="M754.5 202.4h9l-3.5 3.4h-9z" fill="#fafafa" stroke="#1f1f1f" stroke-width="0.700"/><path d="M754.5 199.2h9l-3.5 3.4h-9z" fill="#fafafa" stroke="#1f1f1f" stroke-width="0.700"/><path d="M754.5 196h9l-3.5 3.4h-9z" fill="#fafafa" stroke="#1f1f1f" stroke-width="0.700"/><path d="M758.500 205.500q4-2 7 1.500-2 3.500-6 2.500-1.500-1.500-1-4z" fill="#c9681a" stroke="#7a3a0a" stroke-width="0.400"/><path d="M764 204l2.500-2.500" stroke="#e8c88a" stroke-width="1.300"/></svg>
<svg style="left:584px;top:152.5px" width="6" height="3.5" viewBox="0 0 6 3.5"><path d="M0 0h6 l-3 3.5 z" fill="#f4f4f4"/></svg>
<svg style="left:584px;top:176.5px" width="6" height="3.5" viewBox="0 0 6 3.5"><path d="M0 0h6 l-3 3.5 z" fill="#f4f4f4"/></svg>
<svg style="left:848px;top:152px" width="7.5" height="4.5" viewBox="0 0 7.5 4.5"><path d="M0 0h7.5 l-3.75 4.5 z" fill="#f4f4f4"/></svg>
<svg style="left:0;top:0" width="1500" height="240" viewBox="0 0 1500 240" ><path d="M884.500 146.500h10l5.500 5.500v15h-15.500z" fill="#b9d3f5" stroke="#5a7fb8" stroke-width="0.800"/><path d="M894.500 146.500v5.500h5.500" fill="#e4eefc" stroke="#5a7fb8" stroke-width="0.700"/><rect x="872.500" y="155" width="19.500" height="12.500" rx="1" fill="url(#gw)" stroke="#262626" stroke-width="1.200"/><circle cx="890.800" cy="166.500" r="6.600" fill="url(#gsph)" stroke="#262626" stroke-width="1.200"/><path d="M890.800 161.500v5h4" fill="none" stroke="#b4b8c4" stroke-width="1"/><rect x="870.5" y="165.5" width="3.400" height="3.400" fill="#9dbdf0" stroke="#2f62c4" stroke-width="0.900"/><rect x="915.500" y="148.500" width="10" height="7.500" rx="0.800" fill="url(#gw)" stroke="#262626" stroke-width="1"/><circle cx="924.800" cy="156.800" r="4" fill="url(#gsph)" stroke="#262626" stroke-width="1"/><rect x="913.3" y="154.8" width="3.400" height="3.400" fill="#9dbdf0" stroke="#2f62c4" stroke-width="0.900"/><rect x="915.500" y="174.500" width="9.500" height="6.500" rx="0.800" fill="url(#gw)" stroke="#3a3a3a" stroke-width="0.700"/><ellipse cx="922" cy="182.300" rx="4.300" ry="3" fill="#d0d8ea" stroke="#5a5a5a" stroke-width="0.600"/><path d="M926 170l1.300 2.700 3 0.400-2.200 2 0.600 3-2.700-1.500-2.700 1.500 0.600-3-2.200-2 3-0.400z" fill="#f8c81e"/><rect x="913.3" y="179.3" width="3.400" height="3.400" fill="#9dbdf0" stroke="#2f62c4" stroke-width="0.900"/><path d="M916 200.500l4.500 0.500 3.500 5 1-2.500 3 1-4 5z" fill="#f4f4f4" stroke="#333" stroke-width="0.500"/><path d="M922.500 204l5.500-7 2 1.500-5.500 7z" fill="#d9862a" stroke="#6a3a0a" stroke-width="0.400"/><path d="M914.500 196l1.500 3" stroke="#333" stroke-width="0.800"/><rect x="980.500" y="146" width="19.500" height="28" rx="1" fill="#f6f7fa" stroke="#2a2a2a" stroke-width="1"/><rect x="983" y="148.500" width="10.500" height="10" fill="#4f82d0" stroke="#2c5aa8" stroke-width="0.800"/><rect x="995" y="148.500" width="3" height="10" fill="#c4c9d4"/><path d="M984 164h10M984 169.500h9" stroke="#6a7894" stroke-width="1.200"/><rect x="986" y="162" width="1.800" height="4" fill="#4a5878"/><path d="M993 166.500q6-5 12 0.500l2.500 3q-5 6-11 4.500-5-2-3.500-8z" fill="#b8601a" stroke="#5a2a06" stroke-width="0.500"/><path d="M1003.500 166l6.500-5" stroke="#e6c9a0" stroke-width="2.200" stroke-linecap="round"/><path d="M996 170q4-2 8 0" stroke="#7a3a0a" stroke-width="0.700" fill="none"/><path d="M1048.5 154.5L1048.50 146.90A7.6 7.6 0 0 1 1053.87 149.13z" fill="#f4d82a"/><path d="M1048.5 154.5L1053.87 149.13A7.6 7.6 0 0 1 1056.10 154.50z" fill="#e8402a"/><path d="M1048.5 154.5L1056.10 154.50A7.6 7.6 0 0 1 1053.87 159.87z" fill="#d83a9a"/><path d="M1048.5 154.5L1053.87 159.87A7.6 7.6 0 0 1 1048.50 162.10z" fill="#6a3ad0"/><path d="M1048.5 154.5L1048.50 162.10A7.6 7.6 0 0 1 1043.13 159.87z" fill="#2a6ae0"/><path d="M1048.5 154.5L1043.13 159.87A7.6 7.6 0 0 1 1040.90 154.50z" fill="#2ab8a0"/><path d="M1048.5 154.5L1040.90 154.50A7.6 7.6 0 0 1 1043.13 149.13z" fill="#4ac83a"/><path d="M1048.5 154.5L1043.13 149.13A7.6 7.6 0 0 1 1048.50 146.90z" fill="#b8dc2a"/><defs><radialGradient id="cw" cx="0.400" cy="0.300" r="0.700"><stop offset="0" stop-color="#fff" stop-opacity="0.750"/><stop offset="0.600" stop-color="#fff" stop-opacity="0.100"/><stop offset="1" stop-color="#000" stop-opacity="0.250"/></radialGradient></defs><circle cx="1048.5" cy="154.5" r="7.6" fill="url(#cw)" stroke="#3a3a3a" stroke-width="0.500"/><rect x="1041" y="170" width="16.500" height="1.600" fill="#ececec"/><rect x="1041" y="174" width="16.500" height="2.800" fill="#ececec"/><rect x="1041" y="180" width="16.500" height="4.600" fill="#ececec"/><g stroke="#e4e4e4" stroke-width="1.300"><path d="M1041 195.500h16.500" stroke-dasharray="1.500 1.200"/><path d="M1041 199h16.500" stroke-dasharray="4 1.500"/><path d="M1041 202.500h16.500"/><path d="M1041 206h16.500" stroke-dasharray="5 1.500 1.500 1.500"/><path d="M1041 209.300h16.500" stroke-dasharray="2.500 1.500"/></g><rect x="1206.500" y="144.500" width="19.500" height="31" fill="none" stroke="#ececec" stroke-width="1.200" stroke-dasharray="2 1.200"/><rect x="1210.500" y="148.500" width="10" height="10" rx="1.500" fill="#f0e87a" stroke="#1f1f1f" stroke-width="1.700"/><path d="M1212 153h7" stroke="#c8c060" stroke-width="0.800"/><path d="M1218.500 163.500l7-8" stroke="#ececec" stroke-width="1.500"/><circle cx="1215.500" cy="167" r="4.700" fill="#dbe4ee" stroke="#1f1f1f" stroke-width="1.700"/><g stroke="#dff0ff" stroke-linecap="round"><path d="M1227 145v18" stroke-width="1.300"/><path d="M1218 154h19" stroke-width="1.300"/><path d="M1221 148l12 12M1233 148l-12 12" stroke-width="1.100"/><path d="M1224 147l6 14M1220 151l14 6" stroke-width="0.700" stroke="#a9d4f8"/></g><circle cx="1227" cy="154" r="3.200" fill="#fff"/><circle cx="1227" cy="154" r="5" fill="#cfe8ff" opacity="0.500"/><path d="M1250 146.500h7" stroke="#ececec" stroke-width="1" stroke-dasharray="1.500 1"/><rect x="1251" y="148.500" width="6.500" height="4.500" fill="#ece468" stroke="#2a2a2a" stroke-width="0.900"/><circle cx="1254" cy="157.300" r="2.300" fill="#cfe0f4" stroke="#2a2a2a" stroke-width="0.800"/><path d="M1258 155l6.500-8" stroke="#e8c03a" stroke-width="2"/><path d="M1257 156.500l1.500-2 1.300 1z" fill="#7a4a10"/><rect x="1249.500" y="171.500" width="8.500" height="14" fill="none" stroke="#dcdcdc" stroke-width="1" stroke-dasharray="1.500 1"/><rect x="1252" y="173.800" width="3.400" height="3.400" fill="#fafafa" stroke="#3a3a3a" stroke-width="0.600"/><rect x="1252" y="180" width="3.400" height="3.400" fill="#5a9ae8" stroke="#e8f0fb" stroke-width="0.600"/><path d="M1259.500 175h4.500M1261.750 172.800v4.400M1259.500 181.500h4.500" stroke="#ececec" stroke-width="1.100"/><circle cx="1253.800" cy="198" r="1.900" fill="#f0e87a" stroke="#2a3a6a" stroke-width="0.500"/><circle cx="1253.300" cy="205.300" r="1.900" fill="#b6f0d0" stroke="#2a3a6a" stroke-width="0.500"/><circle cx="1258" cy="198.500" r="1" fill="#1f2a4a"/><path d="M1258.500 200v8.500l2.300-2 1.700 3 1.400-0.800-1.600-2.900h3z" fill="#eef07a" stroke="#2a3a1a" stroke-width="0.600"/><path d="M1288.500 151.500v9M1316.500 151.500v9" stroke="#f0f0f0" stroke-width="1.400"/><path d="M1290 156h25" stroke="#f0f0f0" stroke-width="1.200"/><path d="M1289.500 156l4-2.500v5zM1315.500 156l-4-2.500v5z" fill="#f0f0f0"/><rect x="1287.500" y="163.500" width="29.500" height="4.800" rx="1" fill="#f6c42a" stroke="#a87a10" stroke-width="0.600"/><path d="M1290 164v2M1293 164v1.500M1296 164v2M1299 164v1.500M1302 164v2M1305 164v1.500M1308 164v2M1311 164v1.500M1314 164v2" stroke="#a8780a" stroke-width="0.600"/><path d="M1335.500 153.500h11M1340.800 147.500v11" stroke="#ececec" stroke-width="1.100"/><circle cx="1340.800" cy="153.500" r="2.600" fill="#5a5a5a" stroke="#f4f4f4" stroke-width="1.100"/><path d="M1348.500 146l-2.500 3.500h2l-1.500 3 3.500-4h-2l1.500-2.500z" fill="#f6a81e"/><rect x="1344.500" y="155.500" width="6" height="6.500" rx="0.800" fill="#6a6a6a" stroke="#ececec" stroke-width="1"/><path d="M1346.500 156.500v5M1348.500 156.500v5" stroke="#ececec" stroke-width="0.700"/><path d="M1335 177.500h15M1342.500 170v15" stroke="#eaeaea" stroke-width="1.100"/><circle cx="1342.500" cy="177.500" r="1.900" fill="#9a9a9a" stroke="#d8d8d8" stroke-width="0.600"/><rect x="1337.500" y="196" width="10" height="13" rx="1" fill="#f4f4f4" stroke="#3a3a3a" stroke-width="0.700"/><rect x="1339" y="197.800" width="7" height="2.400" fill="#8a8f9a"/><path d="M1339.800 201.500v6.500M1342.500 201.500v6.500M1345.200 201.500v6.500" stroke="#8a8f9a" stroke-width="1" stroke-dasharray="1.300 0.900"/><defs><linearGradient id="clip" x1="0" y1="0" x2="1" y2="0"><stop offset="0" stop-color="#e8e4dc"/><stop offset="1" stop-color="#a89f94"/></linearGradient></defs><rect x="1377.500" y="148" width="18.500" height="22" rx="2" fill="url(#clip)" stroke="#3a3530" stroke-width="1"/><path d="M1382.500 148.500q0-3 4.300-3t4.300 3v1.500h-8.600z" fill="#f0f0f0" stroke="#3a3530" stroke-width="0.800"/><path d="M1385 154.500h11l5.500 5.500v15h-16.500z" fill="url(#gw2)" stroke="#1f1f1f" stroke-width="1.300"/><path d="M1396 154.500v5.500h5.500" fill="#dde1ea" stroke="#1f1f1f" stroke-width="0.900"/><path d="M1423 147l9.500 10M1435.500 147l-9.500 10" stroke="#f2f2f2" stroke-width="1.700" stroke-linecap="round"/><circle cx="1425" cy="158.500" r="2.200" fill="none" stroke="#3a3a3a" stroke-width="1.400"/><circle cx="1433.500" cy="158.500" r="2.200" fill="none" stroke="#3a3a3a" stroke-width="1.400"/><path d="M1422.500 171.500h7l0 10.500h-7z" fill="#e4e6ec" stroke="#4a4a4a" stroke-width="0.800"/><path d="M1426 174.500h6.500l3.500 3.500v8h-10z" fill="url(#gw2)" stroke="#4a4a4a" stroke-width="0.800"/><path d="M1432.500 174.500v3.500h3.500" fill="none" stroke="#4a4a4a" stroke-width="0.700"/><path d="M1464 152h9.500v6.500h14v10.500h-23.500z" fill="url(#gw)" stroke="#262626" stroke-width="1.300" stroke-linejoin="round"/></svg>
<svg style="left:937px;top:200.5px" width="6" height="3.5" viewBox="0 0 6 3.5"><path d="M0 0h6 l-3 3.5 z" fill="#f4f4f4"/></svg>
<svg style="left:1184px;top:152px" width="7.5" height="4.5" viewBox="0 0 7.5 4.5"><path d="M0 0h7.5 l-3.75 4.5 z" fill="#f4f4f4"/></svg>
<svg style="left:1184px;top:176px" width="7.5" height="4.5" viewBox="0 0 7.5 4.5"><path d="M0 0h7.5 l-3.75 4.5 z" fill="#f4f4f4"/></svg>
<svg style="left:1184px;top:200px" width="7.5" height="4.5" viewBox="0 0 7.5 4.5"><path d="M0 0h7.5 l-3.75 4.5 z" fill="#f4f4f4"/></svg>
<svg style="left:1299px;top:198.5px" width="6" height="3.5" viewBox="0 0 6 3.5"><path d="M0 0h6 l-3 3.5 z" fill="#f4f4f4"/></svg>
<svg style="left:1386px;top:198.5px" width="6" height="3.5" viewBox="0 0 6 3.5"><path d="M0 0h6 l-3 3.5 z" fill="#f4f4f4"/></svg>
<svg style="left:1473px;top:198px" width="6" height="3.5" viewBox="0 0 6 3.5"><path d="M0 0h6 l-3 3.5 z" fill="#f4f4f4"/></svg>
<svg style="left:0;top:236px" width="320" height="28" viewBox="0 236 320 28">
<defs><linearGradient id="ft1" x1="0" y1="0" x2="0" y2="1"><stop offset="0" stop-color="#616161"/><stop offset="1" stop-color="#4e4e4e"/></linearGradient>
<linearGradient id="ft2" x1="0" y1="0" x2="0" y2="1"><stop offset="0" stop-color="#707070"/><stop offset="0.25" stop-color="#636363"/><stop offset="1" stop-color="#555555"/></linearGradient></defs>
<path d="M14 262C22 262 22 239.500 32 239.500H130C140 239.500 138 262 148 262z" fill="url(#ft1)" stroke="#5e5e5e" stroke-width="0.800"/>
<path d="M136 262C146 262 144 239.500 154 239.500H252C262 239.500 260 261 272 262z" fill="url(#ft2)" stroke="#7a7a7a" stroke-width="0.800"/>
<path d="M270 245C270 243 271 243 273 243H284C289 243 292 250 292 257C292 259 291 259 289 259H279C273 259 270 251 270 245z" fill="#4c4c4c" stroke="#5a5a5a" stroke-width="0.800"/>
<path d="M276.500 251.500h9.500M281.250 246.800v9.500" stroke="#dcdcdc" stroke-width="1.800"/>
<path d="M245 248l5.500 5.500M250.500 248l-5.500 5.500" stroke="#8a8a8a" stroke-width="1.800"/>
</svg>
<svg style="left:0;top:880px" width="240" height="28" viewBox="0 880 240 28">
<defs><linearGradient id="lt1" x1="0" y1="0" x2="0" y2="1"><stop offset="0" stop-color="#5a5a5a"/><stop offset="0.800" stop-color="#666"/><stop offset="1" stop-color="#8a8a8a"/></linearGradient>
<linearGradient id="lt2" x1="0" y1="0" x2="0" y2="1"><stop offset="0" stop-color="#454545"/><stop offset="0.800" stop-color="#505050"/><stop offset="1" stop-color="#6a6a6a"/></linearGradient></defs>
<path d="M140 880C148 880 144 899.500 152 899.500H197C205 899.500 201 880 209 880z" fill="url(#lt2)"/>
<path d="M76 880C84 880 80 899.500 88 899.500H133C141 899.500 137 880 145 880z" fill="url(#lt2)"/>
<path d="M6 880C14 880 10 900 18 900H70C78 900 74 880 82 880z" fill="url(#lt1)"/>
<path d="M213 883H226C231 883 233 890 233 896C233 898 232 898 230 898H219C214 898 211 891 211 885C211 883 212 883 213 883z" fill="#4e4e4e" stroke="#5e5e5e" stroke-width="0.800"/>
<path d="M218.500 890.500h8M222.500 886.500v8" stroke="#cfcfcf" stroke-width="1.600"/>
</svg>
<svg style="left:0;top:828px" width="60" height="54" viewBox="0 828 60 54">
<g fill="#8e8e8e"><rect x="2" y="834" width="1.500" height="1.500"/><rect x="5" y="834" width="1.500" height="1.500"/><rect x="8" y="834" width="1.500" height="1.500"/><rect x="11" y="834" width="1.500" height="1.500"/><rect x="14" y="834" width="1.500" height="1.500"/><rect x="17" y="834" width="1.500" height="1.500"/>
<rect x="2" y="837" width="1.500" height="1.500"/><rect x="5" y="837" width="1.500" height="1.500"/><rect x="8" y="837" width="1.500" height="1.500"/><rect x="11" y="837" width="1.500" height="1.500"/><rect x="14" y="837" width="1.500" height="1.500"/><rect x="17" y="837" width="1.500" height="1.500"/></g>
<path d="M6.500 847.500l8 8M14.500 847.500l-8 8" stroke="#f4f4f4" stroke-width="1.800"/>
<path d="M9 870l8 8" stroke="#f2f2f2" stroke-width="2.800" stroke-linecap="round"/><circle cx="7.800" cy="868.800" r="3.700" fill="#f2f2f2"/><path d="M3 863l5.200 5.200 1.200-3.500z" fill="#414141"/><path d="M7.500 868.500l-3.500-4.500" stroke="#414141" stroke-width="2.200"/>
<rect x="27.500" y="864.500" width="13" height="13" rx="1.500" fill="#dfe3ee" stroke="#9aa3b8" stroke-width="1"/><path d="M30.500 867.500l3.500 3-3.500 3M35 874.500h3.500" fill="none" stroke="#4a5266" stroke-width="1.300"/>
<path d="M44.500 869.500h6l-3 3.500z" fill="#666"/>
</svg>
<svg style="left:0;top:878px" width="1500" height="32" viewBox="0 878 1500 32"><path d="M946 887v14.500M949.2 887v14.500M952.4 887v14.500M955.6 887v14.500M958.8 887v14.500M944.500 889.5h15.500M944.500 892.7h15.500M944.500 895.9h15.500M944.500 899.1h15.500" stroke="#d0d0d0" stroke-width="0.900" fill="none"/><g fill="#9a9a9a"><rect x="968.5" y="887.5" width="1.100" height="1.100"/><rect x="968.5" y="890.1" width="1.100" height="1.100"/><rect x="968.5" y="892.7" width="1.100" height="1.100"/><rect x="968.5" y="895.3" width="1.100" height="1.100"/><rect x="968.5" y="897.9" width="1.100" height="1.100"/><rect x="968.5" y="900.5" width="1.100" height="1.100"/><rect x="971.3" y="887.5" width="1.100" height="1.100"/><rect x="971.3" y="890.1" width="1.100" height="1.100"/><rect x="971.3" y="892.7" width="1.100" height="1.100"/><rect x="971.3" y="895.3" width="1.100" height="1.100"/><rect x="971.3" y="897.9" width="1.100" height="1.100"/><rect x="971.3" y="900.5" width="1.100" height="1.100"/><rect x="974.1" y="887.5" width="1.100" height="1.100"/><rect x="974.1" y="890.1" width="1.100" height="1.100"/><rect x="974.1" y="892.7" width="1.100" height="1.100"/><rect x="974.1" y="895.3" width="1.100" height="1.100"/><rect x="974.1" y="897.9" width="1.100" height="1.100"/><rect x="974.1" y="900.5" width="1.100" height="1.100"/><rect x="976.9" y="887.5" width="1.100" height="1.100"/><rect x="976.9" y="890.1" width="1.100" height="1.100"/><rect x="976.9" y="892.7" width="1.100" height="1.100"/><rect x="976.9" y="895.3" width="1.100" height="1.100"/><rect x="976.9" y="897.9" width="1.100" height="1.100"/><rect x="976.9" y="900.5" width="1.100" height="1.100"/><rect x="979.7" y="887.5" width="1.100" height="1.100"/><rect x="979.7" y="890.1" width="1.100" height="1.100"/><rect x="979.7" y="892.7" width="1.100" height="1.100"/><rect x="979.7" y="895.3" width="1.100" height="1.100"/><rect x="979.7" y="897.9" width="1.100" height="1.100"/><rect x="979.7" y="900.5" width="1.100" height="1.100"/><rect x="982.5" y="887.5" width="1.100" height="1.100"/><rect x="982.5" y="890.1" width="1.100" height="1.100"/><rect x="982.5" y="892.7" width="1.100" height="1.100"/><rect x="982.5" y="895.3" width="1.100" height="1.100"/><rect x="982.5" y="897.9" width="1.100" height="1.100"/><rect x="982.5" y="900.5" width="1.100" height="1.100"/></g><path d="M1012 888v13.500h12.500" fill="none" stroke="#2b8cf4" stroke-width="1.800"/><path d="M1012 897.500h4v4" fill="none" stroke="#2b8cf4" stroke-width="1.200"/><circle cx="1040" cy="894.800" r="6" fill="none" stroke="#c4c4c4" stroke-width="1.300"/><path d="M1040 894.800h8.500M1040 894.800l5.500-6" stroke="#c4c4c4" stroke-width="1.200"/><path d="M1080.500 885v18M1073 886l15.500 16.500" stroke="#b4b4b4" stroke-width="1.300"/><path d="M1125 889l-13 12.500h15.500" fill="none" stroke="#c8c8c8" stroke-width="1.300"/><circle cx="1118.300" cy="895.300" r="1.300" fill="#d8d8d8"/><rect x="1137.800" y="889.800" width="12.500" height="12.500" fill="none" stroke="#2b8cf4" stroke-width="1.700"/><circle cx="1139" cy="890.500" r="1.800" fill="#1fd01f" stroke="#0a3a0a" stroke-width="0.500"/><path d="M1182.500 887.500l7 3.500v8l-7 3.500-7-3.500v-8zM1175.500 891l7 3.500 7-3.500M1182.500 894.500v8" fill="none" stroke="#d8d8d8" stroke-width="1.200" stroke-linejoin="round"/><circle cx="1177" cy="890" r="1.800" fill="#1fd01f" stroke="#0a3a0a" stroke-width="0.500"/><path d="M1223.5 887.5l2.200 7.500 5.800 6.500-6-2.500-2 1.500-2-1.500-6 2.500 5.800-6.500z" fill="#2b8cf4"/><circle cx="1228.500" cy="890" r="2.300" fill="none" stroke="#2b8cf4" stroke-width="1.200"/><path d="M1246.5 888l2.200 7.500 5.800 6.500-6-2.500-2 1.500-2-1.500-6 2.500 5.800-6.500z" fill="#c4c4c4"/><path d="M1252.500 886.500l-3 4h2.500l-2.500 4" fill="none" stroke="#c4c4c4" stroke-width="1.100"/><path d="M1249 886.500l-3.500 5.500" stroke="#515151" stroke-width="1"/><path d="M1270.5 888l2.200 7.500 5.800 6.500-6-2.500-2 1.500-2-1.500-6 2.500 5.800-6.500z" fill="#bdbdbd"/><g fill="#d4d4d4"><rect x="-1.400" y="-6.600" width="2.800" height="3" transform="translate(1329.5 895) rotate(0)"/><rect x="-1.400" y="-6.600" width="2.800" height="3" transform="translate(1329.5 895) rotate(45)"/><rect x="-1.400" y="-6.600" width="2.800" height="3" transform="translate(1329.5 895) rotate(90)"/><rect x="-1.400" y="-6.600" width="2.800" height="3" transform="translate(1329.5 895) rotate(135)"/><rect x="-1.400" y="-6.600" width="2.800" height="3" transform="translate(1329.5 895) rotate(180)"/><rect x="-1.400" y="-6.600" width="2.800" height="3" transform="translate(1329.5 895) rotate(225)"/><rect x="-1.400" y="-6.600" width="2.800" height="3" transform="translate(1329.5 895) rotate(270)"/><rect x="-1.400" y="-6.600" width="2.800" height="3" transform="translate(1329.5 895) rotate(315)"/></g><circle cx="1329.5" cy="895" r="3.600" fill="none" stroke="#d4d4d4" stroke-width="2.600"/><path d="M1362 895h14.500M1369.250 887.800v14.500" stroke="#f2f2f2" stroke-width="1.600"/><rect x="1387.500" y="887.500" width="5.800" height="5.800" fill="none" stroke="#e0e0e0" stroke-width="1.100"/><circle cx="1398.800" cy="893.300" r="3.100" fill="none" stroke="#e0e0e0" stroke-width="1.100"/><path d="M1393 896.500l3.700 5.800h-7.400z" fill="none" stroke="#e0e0e0" stroke-width="1.100"/><circle cx="1421.500" cy="895" r="8.300" fill="#1e4f9e" stroke="#1c78ee" stroke-width="2"/><path d="M1418.500 897.500l1.500 1.200 5.500-6" fill="none" stroke="#3d98ff" stroke-width="1.300"/><rect x="1441.500" y="886.500" width="18" height="15.500" fill="#f4f4f4" stroke="#2a2a2a" stroke-width="1"/><path d="M1443 900.500c3-14 8-14 13 0" fill="none" stroke="#222" stroke-width="1.200"/><path d="M1460 895.500l4 8h-8z" fill="#f0701a" stroke="#a83a06" stroke-width="0.500"/><path d="M1460 898v3" stroke="#fff" stroke-width="0.900"/><rect x="1473.500" y="889.500" width="14.500" height="11.500" fill="none" stroke="#dcdcdc" stroke-width="1.200"/><path d="M1482 892h3.500v3.500M1485.500 892l-3.500 3.500M1479.500 898.500h-3.500v-3.500M1476 898.500l3.500-3.500" fill="none" stroke="#dcdcdc" stroke-width="1.100"/><path d="M1496.500 890.500h5M1496.500 895h5M1496.500 899.500h5" stroke="#e8e8e8" stroke-width="1.600"/></svg>
<svg style="left:992px;top:892.5px" width="7.5" height="4.3" viewBox="0 0 7.5 4.3"><path d="M0 0h7.5 l-3.75 4.3 z" fill="#f6f6f6"/></svg>
<svg style="left:1057px;top:892.5px" width="7.5" height="4.3" viewBox="0 0 7.5 4.3"><path d="M0 0h7.5 l-3.75 4.3 z" fill="#f6f6f6"/></svg>
<svg style="left:1095.5px;top:892.5px" width="7.5" height="4.3" viewBox="0 0 7.5 4.3"><path d="M0 0h7.5 l-3.75 4.3 z" fill="#f6f6f6"/></svg>
<svg style="left:1159px;top:892.5px" width="7.5" height="4.3" viewBox="0 0 7.5 4.3"><path d="M0 0h7.5 l-3.75 4.3 z" fill="#f6f6f6"/></svg>
<svg style="left:1198px;top:892.5px" width="7.5" height="4.3" viewBox="0 0 7.5 4.3"><path d="M0 0h7.5 l-3.75 4.3 z" fill="#f6f6f6"/></svg>
<svg style="left:1305px;top:892.5px" width="7.5" height="4.3" viewBox="0 0 7.5 4.3"><path d="M0 0h7.5 l-3.75 4.3 z" fill="#f6f6f6"/></svg>
<svg style="left:1346px;top:892.5px" width="7.5" height="4.3" viewBox="0 0 7.5 4.3"><path d="M0 0h7.5 l-3.75 4.3 z" fill="#f6f6f6"/></svg><span class="t big" style="left:233.6px;">H</span>
<span class="t big" style="left:352.5px;">ppy</span>
<span class="t big" style="left:531.5px;">V</span>
<span class="t big" style="left:646.5px;">lentine's</span>
<span class="t big" style="left:1017.5px;">D</span>
<span class="t big" style="left:1135.5px;">y</span>
<div class="a" style="left:1084px;top:538px;width:56.5px;height:60px;background:#fff"></div>
<span class="ra" style="left:302.5px;transform:scaleX(0.91)">A</span>
<svg style="left:302px;top:540px" width="52" height="58" viewBox="0 540 52 58"><path d="M7 594.500h6.500l5.500-22.500-1-5.500-2 5.500z" fill="#f09a96" opacity="0.800"/><path d="M35 578.500h2.600l5 16h-3.600z" fill="#ee908c" opacity="0.750"/><path d="M24 551l-7.500 24" stroke="#8e0c12" stroke-width="1.200" opacity="0.450" fill="none"/><path d="M16 581.500l19-8.500" stroke="#ef6a64" stroke-width="1" opacity="0.700" fill="none"/><path d="M2 594.500l4.500 0 2-6z" fill="#9a0d13" opacity="0.500"/></svg>
<span class="ra" style="left:595.5px;transform:scaleX(0.91)">A</span>
<svg style="left:595px;top:540px" width="52" height="58" viewBox="0 540 52 58"><path d="M7 594.500h6.500l5.500-22.500-1-5.500-2 5.500z" fill="#f09a96" opacity="0.800"/><path d="M35 578.500h2.600l5 16h-3.600z" fill="#ee908c" opacity="0.750"/><path d="M24 551l-7.500 24" stroke="#8e0c12" stroke-width="1.200" opacity="0.450" fill="none"/><path d="M16 581.500l19-8.500" stroke="#ef6a64" stroke-width="1" opacity="0.700" fill="none"/><path d="M2 594.500l4.500 0 2-6z" fill="#9a0d13" opacity="0.500"/></svg>
<span class="ra" style="left:1087.0px;transform:scaleX(0.91)">A</span>
<svg style="left:1086.5px;top:540px" width="52" height="58" viewBox="0 540 52 58"><path d="M7 594.500h6.500l5.500-22.500-1-5.500-2 5.500z" fill="#f09a96" opacity="0.800"/><path d="M35 578.500h2.600l5 16h-3.600z" fill="#ee908c" opacity="0.750"/><path d="M24 551l-7.500 24" stroke="#8e0c12" stroke-width="1.200" opacity="0.450" fill="none"/><path d="M16 581.500l19-8.500" stroke="#ef6a64" stroke-width="1" opacity="0.700" fill="none"/><path d="M2 594.500l4.500 0 2-6z" fill="#9a0d13" opacity="0.500"/></svg>
<svg style="left:170px;top:570px" width="70" height="70" viewBox="170 570 70 70" fill="none" stroke="#3a3a3a" stroke-width="1.200">
<path d="M178.200 588.600V628.500H218"/><rect x="174.800" y="625" width="7.400" height="7"/></svg>
<span class="t" style="left:179.400px;top:573.100px;font-size:14.500px;color:#333;transform:scaleX(1.08);transform-origin:50% 50%">Y</span>
<span class="t" style="left:221.200px;top:615.900px;font-size:14.500px;color:#333;transform:scaleX(1.05);transform-origin:50% 50%">X</span>
<svg style="left:680px;top:505px" width="630" height="250" viewBox="680 505 630 250" fill="none" stroke="#444" stroke-width="1.300">
<path d="M688 646.700H1299" stroke-dasharray="3.200 4.560" stroke-dashoffset="2.010"/><path d="M1222.700 512V710.500" stroke-dasharray="3.200 4.560" stroke-dashoffset="0.620"/>
<path d="M1216 727l0.500 4M1222 745l4-5M1221 712l3 1" stroke="#dcdcdc"/></svg>
<div class="a" style="left:1397px;top:303px;width:90px;height:90px;border-radius:50%;border:6px solid #fbfbfb"></div>
<div class="a" style="left:1421px;top:327px;width:42px;height:42px;background:#eeeeee;border:1px solid #a8a8a8"></div>
<div class="a" style="left:1430px;top:335px;width:25px;height:25px;background:#dfe1e6"></div>
<span class="vc" style="left:1436.5px;top:295px">N</span>
<span class="vc" style="left:1437px;top:384.5px">S</span>
<span class="vc" style="left:1482px;top:340px">E</span>
<span class="vc" style="left:1391px;top:340px">O</span>
<div class="a" style="left:1424px;top:417px;width:37px;height:13px;background:#e8e8f3;border-radius:3px"></div>
<svg style="left:1449px;top:420px" width="10" height="8" viewBox="0 0 10 8"><path d="M1 1.5h7l-3.5 4.5z" fill="none" stroke="#b4b4c0" stroke-width="1"/></svg>
<svg style="left:1455px;top:268px" width="45" height="16" viewBox="1455 268 45 16" fill="none" stroke="#555" stroke-width="1.2">
<rect x="1459.5" y="276" width="8" height="3" rx="1"/><rect x="1475.500" y="272.500" width="7" height="7" rx="1"/><path d="M1477.500 272.500v-1.500h7v7h-2"/><rect x="1478" y="275" width="2.500" height="2.500" stroke-width="0.800"/>
<path d="M1491.500 271.500l8 8M1499.500 271.500l-8 8" stroke-width="2.600"/><path d="M1491.500 271.500l8 8M1499.500 271.500l-8 8" stroke="#fff" stroke-width="0.900"/></svg>
<div class="a" style="left:1478px;top:449px;width:30px;height:170px;background:#f1f1f1;border:1px solid #bdbdbd;border-radius:3px;box-shadow:0 0 0 2px #f6f6f6"></div>
<svg style="left:1478px;top:449px" width="22" height="170" viewBox="1478 449 22 170" fill="none" stroke="#d2d2d2" stroke-width="1.2">
<circle cx="1493" cy="474" r="9"/><circle cx="1493" cy="474" r="4.5"/><path d="M1481 494.500H1500M1481 580.500H1500" stroke="#d9d9d9"/>
<path d="M1487 512c-3-3-4-2-3 0l4 6h9v-14M1489 514v-10M1492 514v-12M1495 514v-11"/>
<path d="M1483 522l12 12M1495 522l-12 12"/><circle cx="1495" cy="533" r="3.500" fill="#f1f1f1"/>
<path d="M1492 553v22M1483 561c6-4 14-4 18 0M1483 561c6 4 14 4 18 0"/>
<path d="M1483 583h4v4h-4zM1489 583h4v4h-4zM1495 583h4v4h-4z"/><rect x="1483" y="590" width="12" height="10"/><path d="M1487 592.500v5l4-2.500z"/></svg><span class="t" style="left:52.50px;top:123.64px;font-size:12px;color:#fff;font-family:'Liberation Sans',sans-serif;letter-spacing:0.114px;">Inizio</span><span class="t" style="left:99.50px;top:123.64px;font-size:12px;color:#e6e6e6;font-family:'Liberation Sans',sans-serif;letter-spacing:-0.257px;">Inserisci</span><span class="t" style="left:159.50px;top:123.64px;font-size:12px;color:#e6e6e6;font-family:'Liberation Sans',sans-serif;letter-spacing:0.109px;">Annota</span><span class="t" style="left:216.50px;top:123.64px;font-size:12px;color:#e6e6e6;font-family:'Liberation Sans',sans-serif;letter-spacing:-0.181px;">Parametrico</span><span class="t" style="left:299.50px;top:123.64px;font-size:12px;color:#e6e6e6;font-family:'Liberation Sans',sans-serif;letter-spacing:-0.354px;">Vista</span><span class="t" style="left:342.50px;top:123.64px;font-size:12px;color:#e6e6e6;font-family:'Liberation Sans',sans-serif;letter-spacing:-0.248px;">Gestisci</span><span class="t" style="left:401.50px;top:123.64px;font-size:12px;color:#e6e6e6;font-family:'Liberation Sans',sans-serif;letter-spacing:0.111px;">Output</span><span class="t" style="left:457.50px;top:123.64px;font-size:12px;color:#e6e6e6;font-family:'Liberation Sans',sans-serif;letter-spacing:0.136px;">Moduli aggiuntivi</span><span class="t" style="left:569.50px;top:123.64px;font-size:12px;color:#e6e6e6;font-family:'Liberation Sans',sans-serif;letter-spacing:-0.333px;">A360</span><span class="t" style="left:615.50px;top:123.64px;font-size:12px;color:#e6e6e6;font-family:'Liberation Sans',sans-serif;letter-spacing:0.151px;">Applicazioni disponibili</span><span class="t" style="left:758.50px;top:123.64px;font-size:12px;color:#e6e6e6;font-family:'Liberation Sans',sans-serif;letter-spacing:-0.143px;">BIM 360</span><span class="t" style="left:820.50px;top:123.64px;font-size:12px;color:#e6e6e6;font-family:'Liberation Sans',sans-serif;letter-spacing:-0.273px;">Performance</span><span class="t" style="left:472.50px;top:102.14px;font-size:12px;color:#111;font-family:'Liberation Sans',sans-serif;letter-spacing:-0.146px;">Autodesk AutoCAD 2017</span><span class="t" style="left:615.50px;top:102.14px;font-size:12px;color:#111;font-family:'Liberation Sans',sans-serif;letter-spacing:-0.114px;">Disegno1.dwg</span><span class="t" style="left:930.50px;top:102.07px;font-size:11.5px;color:#c4c4c4;font-family:'Liberation Sans',sans-serif;letter-spacing:-0.396px;font-style:italic">Digitare parola chiave o frase</span><span class="t" style="left:1152.50px;top:102.14px;font-size:12px;color:#f0f0f0;font-family:'Liberation Sans',sans-serif;letter-spacing:-0.055px;">Accedi</span><span class="t" style="left:6.50px;top:181.64px;font-size:12px;color:#f2f2f2;font-family:'Liberation Sans',sans-serif;letter-spacing:-0.135px;">Linea</span><span class="t" style="left:43.50px;top:181.64px;font-size:12px;color:#f2f2f2;font-family:'Liberation Sans',sans-serif;letter-spacing:-0.075px;">Polilinea</span><span class="t" style="left:101.50px;top:182.64px;font-size:12px;color:#f2f2f2;font-family:'Liberation Sans',sans-serif;letter-spacing:-0.237px;">Cerchio</span><span class="t" style="left:163.50px;top:182.64px;font-size:12px;color:#f2f2f2;font-family:'Liberation Sans',sans-serif;letter-spacing:0.003px;">Arco</span><span class="t" style="left:267.50px;top:148.64px;font-size:12px;color:#f2f2f2;font-family:'Liberation Sans',sans-serif;letter-spacing:-0.277px;">Sposta</span><span class="t" style="left:337.50px;top:148.64px;font-size:12px;color:#f2f2f2;font-family:'Liberation Sans',sans-serif;letter-spacing:-0.266px;">Ruota</span><span class="t" style="left:267.50px;top:173.14px;font-size:12px;color:#f2f2f2;font-family:'Liberation Sans',sans-serif;letter-spacing:-0.132px;">Copia</span><span class="t" style="left:338.50px;top:173.14px;font-size:12px;color:#f2f2f2;font-family:'Liberation Sans',sans-serif;letter-spacing:-0.209px;">Specchio</span><span class="t" style="left:267.50px;top:197.64px;font-size:12px;color:#f2f2f2;font-family:'Liberation Sans',sans-serif;letter-spacing:0.002px;">Stira</span><span class="t" style="left:337.50px;top:197.64px;font-size:12px;color:#f2f2f2;font-family:'Liberation Sans',sans-serif;letter-spacing:-0.466px;">Scala</span><span class="t" style="left:480.50px;top:182.64px;font-size:12px;color:#f2f2f2;font-family:'Liberation Sans',sans-serif;letter-spacing:-0.398px;">Testo</span><span class="t" style="left:520.50px;top:181.64px;font-size:12px;color:#f2f2f2;font-family:'Liberation Sans',sans-serif;letter-spacing:-0.001px;">Quota</span><span class="t" style="left:599.50px;top:181.64px;font-size:12px;color:#f2f2f2;font-family:'Liberation Sans',sans-serif;letter-spacing:-0.000px;">Proprietà</span><span class="t" style="left:610.50px;top:197.64px;font-size:12px;color:#f2f2f2;font-family:'Liberation Sans',sans-serif;letter-spacing:-0.063px;">layer</span><span class="t" style="left:732.50px;top:148.64px;font-size:12px;color:#f2f2f2;font-family:'Liberation Sans',sans-serif;letter-spacing:0.013px;">0</span><span class="t" style="left:865.50px;top:181.64px;font-size:12px;color:#f2f2f2;font-family:'Liberation Sans',sans-serif;letter-spacing:-0.368px;">Inserisci</span><span class="t" style="left:952.50px;top:181.64px;font-size:12px;color:#f2f2f2;font-family:'Liberation Sans',sans-serif;letter-spacing:-0.144px;">Corrispondenza</span><span class="t" style="left:958.50px;top:197.64px;font-size:12px;color:#f2f2f2;font-family:'Liberation Sans',sans-serif;letter-spacing:0.127px;">con proprietà</span><span class="t" style="left:1096.50px;top:149.64px;font-size:12px;color:#f2f2f2;font-family:'Liberation Sans',sans-serif;letter-spacing:-0.380px;">DaLayer</span><span class="t" style="left:1127.50px;top:173.14px;font-size:12px;color:#f2f2f2;font-family:'Liberation Sans',sans-serif;letter-spacing:-0.237px;">DaLayer</span><span class="t" style="left:1127.50px;top:197.14px;font-size:12px;color:#f2f2f2;font-family:'Liberation Sans',sans-serif;letter-spacing:-0.237px;">DaLayer</span><span class="t" style="left:1202.50px;top:181.64px;font-size:12px;color:#f2f2f2;font-family:'Liberation Sans',sans-serif;letter-spacing:-0.222px;">Gruppo</span><span class="t" style="left:1284.50px;top:182.64px;font-size:12px;color:#f2f2f2;font-family:'Liberation Sans',sans-serif;letter-spacing:-0.219px;">Misura</span><span class="t" style="left:1370.50px;top:183.14px;font-size:12px;color:#f2f2f2;font-family:'Liberation Sans',sans-serif;letter-spacing:0.145px;">Incolla</span><span class="t" style="left:1462.50px;top:182.64px;font-size:12px;color:#f2f2f2;font-family:'Liberation Sans',sans-serif;letter-spacing:-0.665px;">Base</span><span class="t" style="left:92.50px;top:221.14px;font-size:12px;color:#f2f2f2;font-family:'Liberation Sans',sans-serif;letter-spacing:-0.190px;">Disegna</span><span class="t" style="left:333.50px;top:221.14px;font-size:12px;color:#f2f2f2;font-family:'Liberation Sans',sans-serif;letter-spacing:-0.132px;">Edita</span><span class="t" style="left:490.50px;top:221.14px;font-size:12px;color:#f2f2f2;font-family:'Liberation Sans',sans-serif;letter-spacing:-0.003px;">Annotazione</span><span class="t" style="left:706.50px;top:221.14px;font-size:12px;color:#f2f2f2;font-family:'Liberation Sans',sans-serif;letter-spacing:-0.266px;">Layer</span><span class="t" style="left:878.50px;top:221.14px;font-size:12px;color:#f2f2f2;font-family:'Liberation Sans',sans-serif;letter-spacing:0.111px;">Blocco</span><span class="t" style="left:1035.50px;top:221.14px;font-size:12px;color:#f2f2f2;font-family:'Liberation Sans',sans-serif;letter-spacing:-0.000px;">Proprietà</span><span class="t" style="left:1209.50px;top:221.14px;font-size:12px;color:#f2f2f2;font-family:'Liberation Sans',sans-serif;letter-spacing:-0.055px;">Gruppi</span><span class="t" style="left:1291.50px;top:221.14px;font-size:12px;color:#f2f2f2;font-family:'Liberation Sans',sans-serif;letter-spacing:0.383px;">Utilità</span><span class="t" style="left:1380.50px;top:221.14px;font-size:12px;color:#f2f2f2;font-family:'Liberation Sans',sans-serif;letter-spacing:0.142px;">Appunti</span><span class="t" style="left:1449.50px;top:221.14px;font-size:12px;color:#f2f2f2;font-family:'Liberation Sans',sans-serif;letter-spacing:-0.354px;">Vista</span><span class="t" style="left:30.50px;top:245.64px;font-size:12px;color:#b4b4b4;font-family:'Liberation Sans',sans-serif;letter-spacing:0.114px;">Inizio</span><span class="t" style="left:152.50px;top:245.64px;font-size:12px;color:#ececec;font-family:'Liberation Sans',sans-serif;letter-spacing:-0.075px;">Disegno1*</span><span class="t" style="left:1.50px;top:270.74px;font-size:10px;color:#333;font-family:'Liberation Sans',sans-serif;letter-spacing:-0.075px;">[−][Alto][Wireframe 2D]</span><span class="t" style="left:24.50px;top:842.27px;font-size:14px;color:#000;font-family:'Liberation Mono',monospace;letter-spacing:-0.065px;">Comando:</span><span class="t" style="left:57.50px;top:863.89px;font-size:14.5px;color:#8a8a8a;font-family:'Liberation Mono',monospace;letter-spacing:-0.033px;font-style:italic">Digitare un comando</span><span class="t" style="left:22.50px;top:885.64px;font-size:12px;color:#fff;font-family:'Liberation Sans',sans-serif;letter-spacing:0.053px;font-weight:bold">Modello</span><span class="t" style="left:90.50px;top:885.64px;font-size:12px;color:#c8c8c8;font-family:'Liberation Sans',sans-serif;letter-spacing:-0.286px;">Layout1</span><span class="t" style="left:154.50px;top:885.64px;font-size:12px;color:#c8c8c8;font-family:'Liberation Sans',sans-serif;letter-spacing:-0.286px;">Layout2</span><span class="t" style="left:880.50px;top:889.64px;font-size:12px;color:#fff;font-family:'Liberation Sans',sans-serif;letter-spacing:-0.570px;">MODELLO</span><span class="t" style="left:1287.00px;top:890.29px;font-size:11px;color:#fff;font-family:'Liberation Sans',sans-serif;letter-spacing:-0.532px;">1:1</span><span class="t" style="left:1431.50px;top:343.88px;font-size:9px;color:#8c8c8c;font-family:'Liberation Sans',sans-serif;letter-spacing:-0.247px;">ALTO</span><span class="t" style="left:1426.50px;top:418.88px;font-size:9px;color:#999;font-family:'Liberation Sans',sans-serif;letter-spacing:-0.767px;">WCS</span>
</div></body></html>
